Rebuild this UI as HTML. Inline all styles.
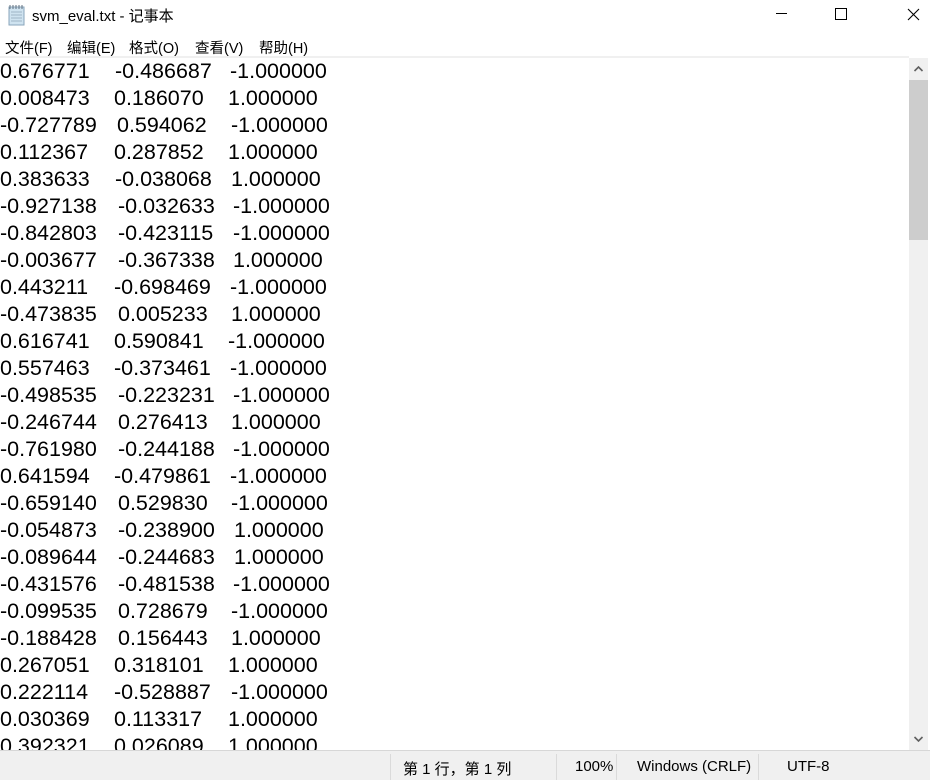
<!DOCTYPE html>
<html><head><meta charset="utf-8"><style>
body{margin:0;width:930px;height:779px;background:#fff;position:relative;overflow:hidden;font-family:"Liberation Sans","Noto Sans CJK SC",sans-serif;}
.title{position:absolute;left:32px;top:5px;font-size:15px;color:#000;}
.menu{position:absolute;top:37px;font-size:14.5px;}
.sep{position:absolute;left:0;top:56px;width:909px;height:2px;background:#f0f0f0;}
.r{position:absolute;font-size:21.5px;line-height:27px;white-space:pre;color:#000;}
.sb{position:absolute;left:909px;top:58px;width:19px;height:692px;background:#f0f0f0;}
.thumb{position:absolute;left:909px;top:80px;width:19px;height:160px;background:#cdcdcd;}
.status{position:absolute;left:0;top:750px;width:930px;height:29px;background:#f0f0f0;border-top:1px solid #d7d7d7;font-size:15px;}
.status span{position:absolute;top:7px;}
.div{position:absolute;top:3px;width:1px;height:26px;background:#dadada;}
</style></head><body>
<svg style="position:absolute;left:8px;top:4px" width="18" height="22" viewBox="0 0 18 22"><rect x="1" y="3" width="15" height="18" fill="#cfe3f0" stroke="#8aa6bb"/><path d="M3 8h11M3 11h11M3 14h11M3 17h11" stroke="#9fb6c6"/><path d="M2 1v4M5 1v4M8 1v4M11 1v4M14 1v4" stroke="#607080"/></svg>
<div class="title">svm_eval.txt - 记事本</div>
<svg style="position:absolute;left:775px;top:6px" width="150" height="20"><path d="M1 7.5h11" stroke="#000"/><rect x="60.5" y="2.5" width="11" height="11" fill="none" stroke="#000"/><path d="M133 3l11 11M144 3l-11 11" stroke="#000" stroke-width="1.1"/></svg>
<div class="menu" style="left:5px">文件(F)</div>
<div class="menu" style="left:67px">编辑(E)</div>
<div class="menu" style="left:129px">格式(O)</div>
<div class="menu" style="left:195px">查看(V)</div>
<div class="menu" style="left:259px">帮助(H)</div>
<div class="sep"></div>
<div class="r" style="left:0;top:58px">0.676771</div><div class="r" style="left:115px;top:58px">-0.486687</div><div class="r" style="left:230px;top:58px">-1.000000</div>
<div class="r" style="left:0;top:85px">0.008473</div><div class="r" style="left:114px;top:85px">0.186070</div><div class="r" style="left:228px;top:85px">1.000000</div>
<div class="r" style="left:0;top:112px">-0.727789</div><div class="r" style="left:117px;top:112px">0.594062</div><div class="r" style="left:231px;top:112px">-1.000000</div>
<div class="r" style="left:0;top:139px">0.112367</div><div class="r" style="left:114px;top:139px">0.287852</div><div class="r" style="left:228px;top:139px">1.000000</div>
<div class="r" style="left:0;top:166px">0.383633</div><div class="r" style="left:115px;top:166px">-0.038068</div><div class="r" style="left:231px;top:166px">1.000000</div>
<div class="r" style="left:0;top:193px">-0.927138</div><div class="r" style="left:118px;top:193px">-0.032633</div><div class="r" style="left:233px;top:193px">-1.000000</div>
<div class="r" style="left:0;top:220px">-0.842803</div><div class="r" style="left:118px;top:220px">-0.423115</div><div class="r" style="left:233px;top:220px">-1.000000</div>
<div class="r" style="left:0;top:247px">-0.003677</div><div class="r" style="left:118px;top:247px">-0.367338</div><div class="r" style="left:233px;top:247px">1.000000</div>
<div class="r" style="left:0;top:274px">0.443211</div><div class="r" style="left:114px;top:274px">-0.698469</div><div class="r" style="left:230px;top:274px">-1.000000</div>
<div class="r" style="left:0;top:301px">-0.473835</div><div class="r" style="left:118px;top:301px">0.005233</div><div class="r" style="left:231px;top:301px">1.000000</div>
<div class="r" style="left:0;top:328px">0.616741</div><div class="r" style="left:114px;top:328px">0.590841</div><div class="r" style="left:228px;top:328px">-1.000000</div>
<div class="r" style="left:0;top:355px">0.557463</div><div class="r" style="left:114px;top:355px">-0.373461</div><div class="r" style="left:230px;top:355px">-1.000000</div>
<div class="r" style="left:0;top:382px">-0.498535</div><div class="r" style="left:118px;top:382px">-0.223231</div><div class="r" style="left:233px;top:382px">-1.000000</div>
<div class="r" style="left:0;top:409px">-0.246744</div><div class="r" style="left:118px;top:409px">0.276413</div><div class="r" style="left:231px;top:409px">1.000000</div>
<div class="r" style="left:0;top:436px">-0.761980</div><div class="r" style="left:118px;top:436px">-0.244188</div><div class="r" style="left:233px;top:436px">-1.000000</div>
<div class="r" style="left:0;top:463px">0.641594</div><div class="r" style="left:114px;top:463px">-0.479861</div><div class="r" style="left:230px;top:463px">-1.000000</div>
<div class="r" style="left:0;top:490px">-0.659140</div><div class="r" style="left:118px;top:490px">0.529830</div><div class="r" style="left:231px;top:490px">-1.000000</div>
<div class="r" style="left:0;top:517px">-0.054873</div><div class="r" style="left:118px;top:517px">-0.238900</div><div class="r" style="left:234px;top:517px">1.000000</div>
<div class="r" style="left:0;top:544px">-0.089644</div><div class="r" style="left:118px;top:544px">-0.244683</div><div class="r" style="left:234px;top:544px">1.000000</div>
<div class="r" style="left:0;top:571px">-0.431576</div><div class="r" style="left:118px;top:571px">-0.481538</div><div class="r" style="left:233px;top:571px">-1.000000</div>
<div class="r" style="left:0;top:598px">-0.099535</div><div class="r" style="left:118px;top:598px">0.728679</div><div class="r" style="left:231px;top:598px">-1.000000</div>
<div class="r" style="left:0;top:625px">-0.188428</div><div class="r" style="left:118px;top:625px">0.156443</div><div class="r" style="left:231px;top:625px">1.000000</div>
<div class="r" style="left:0;top:652px">0.267051</div><div class="r" style="left:114px;top:652px">0.318101</div><div class="r" style="left:228px;top:652px">1.000000</div>
<div class="r" style="left:0;top:679px">0.222114</div><div class="r" style="left:114px;top:679px">-0.528887</div><div class="r" style="left:231px;top:679px">-1.000000</div>
<div class="r" style="left:0;top:706px">0.030369</div><div class="r" style="left:114px;top:706px">0.113317</div><div class="r" style="left:228px;top:706px">1.000000</div>
<div class="r" style="left:0;top:733px">0.392321</div><div class="r" style="left:114px;top:733px">0.026089</div><div class="r" style="left:228px;top:733px">1.000000</div>
<div class="sb"></div><div class="thumb"></div>
<svg style="position:absolute;left:909px;top:58px" width="19" height="692"><path d="M5.5 13l4-4 4 4" stroke="#606060" stroke-width="1.6" fill="none"/><path d="M5.5 679l4 4 4-4" stroke="#606060" stroke-width="1.6" fill="none"/></svg>
<div class="status">
<div class="div" style="left:390px"></div><div class="div" style="left:556px"></div><div class="div" style="left:616px"></div><div class="div" style="left:758px"></div>
<span style="left:403px">第 1 行，第 1 列</span>
<span style="left:575px">100%</span>
<span style="left:637px">Windows (CRLF)</span>
<span style="left:787px">UTF-8</span>
</div>
</body></html>
